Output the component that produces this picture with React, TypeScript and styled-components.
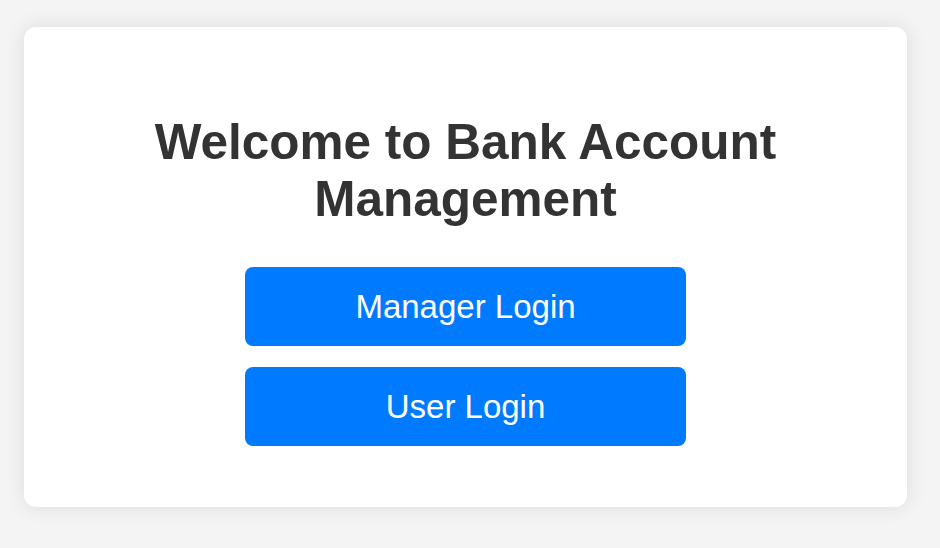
import React from "react";
import styled, { createGlobalStyle } from "styled-components";

const Global = createGlobalStyle`
  html, body {
    margin: 0;
    padding: 0;
    background: #f4f4f4;
    font-family: "Liberation Sans", Arial, sans-serif;
  }
`;

const Page = styled.div`
  box-sizing: border-box;
  width: 940px;
  height: 548px;
  padding: 27px 33px 41px 24px;
  display: flex;
`;

const Card = styled.main`
  box-sizing: border-box;
  flex: 1;
  background: #ffffff;
  border-radius: 12px;
  box-shadow: 0 0 20px rgba(0, 0, 0, 0.1);
  padding: 86px 40px 0;
  display: flex;
  flex-direction: column;
  align-items: center;
`;

const Title = styled.h1`
  margin: 0 0 40px;
  font-size: 49.5px;
  line-height: 57px;
  font-weight: 700;
  color: #333333;
  text-align: center;
  max-width: 700px;
`;

const Actions = styled.div`
  width: 441px;
  display: flex;
  flex-direction: column;
  gap: 21px;
`;

const LoginButton = styled.button`
  height: 79px;
  border: none;
  border-radius: 8px;
  background: #007bff;
  color: #ffffff;
  font-family: "Liberation Sans", Arial, sans-serif;
  font-size: 33px;
  cursor: pointer;
`;

export default function App() {
  return (
    <>
      <Global />
      <Page>
        <Card>
          <Title>Welcome to Bank Account Management</Title>
          <Actions>
            <LoginButton>Manager Login</LoginButton>
            <LoginButton>User Login</LoginButton>
          </Actions>
        </Card>
      </Page>
    </>
  );
}
